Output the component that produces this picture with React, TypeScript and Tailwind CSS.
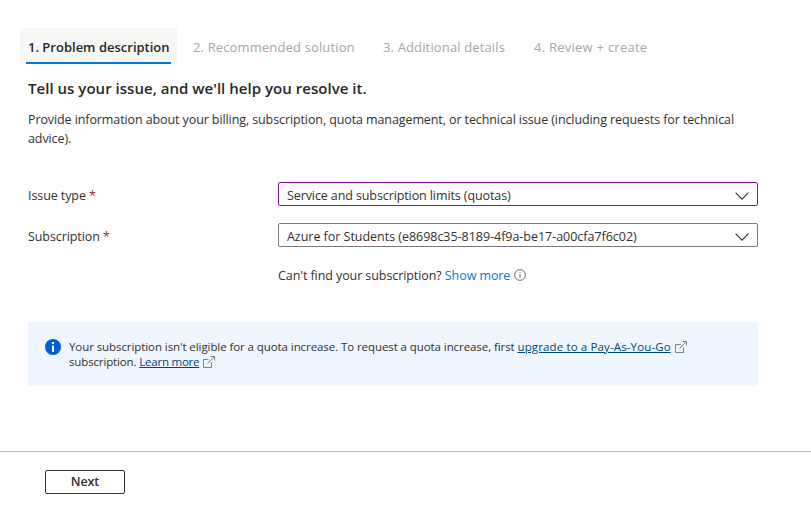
import type { ReactNode } from "react";

const Chevron = () => (
  <svg className="mt-[3px] h-2 w-[14px] shrink-0" viewBox="0 0 14 8" fill="none" stroke="#323130" strokeWidth="1.1">
    <path d="M0.6 0.7 7 7.1 13.4 0.7" />
  </svg>
);

const External = () => (
  <svg className="ml-1 inline-block h-3 w-3 align-[-2px]" viewBox="0 0 12 12" fill="none" stroke="#858585" strokeWidth="1">
    <path d="M5.5 3.5H.5v8h8v-5M4.5 7.5l7-7M7.5.5h4v4" />
  </svg>
);

const Field = ({ label, value, border }: { label: string; value: ReactNode; border: string }) => (
  <div className="flex h-6 items-center">
    <div className="w-[250px] pt-0.5 tracking-[-0.09px]">
      {label} <span className="text-[#a4262c]">*</span>
    </div>
    <div className={`flex h-6 w-[480px] items-center justify-between rounded-[2px] border pr-[8px] pl-2 ${border}`}>
      <span className="pt-0.5">{value}</span>
      <Chevron />
    </div>
  </div>
);

export default function App() {
  return (
    <div className="h-[506px] w-[811px] overflow-hidden bg-white font-['Open_Sans','Noto_Sans',sans-serif] text-[12.5px] leading-[19px] whitespace-nowrap text-[#323130]">
      <nav className="flex pt-7 pl-5 text-[13px] text-[#a6a6a6]">
        <div className="flex h-9 w-[157px] bg-[#f7f7f5] px-1.5">
          <div className="flex w-[145px] items-center border-b-2 border-[#0078d4] pt-1 pl-0.5 font-semibold text-[#292827]">
            <span>1. Problem description</span>
          </div>
        </div>
        <div className="flex h-9 items-center pt-0.5 pl-4">
          <span className="w-[190px] tracking-[0.14px]">2. Recommended solution</span>
          <span className="w-[151px] tracking-[0.14px]">3. Additional details</span>
          <span className="tracking-[0.25px]">4. Review + create</span>
        </div>
      </nav>
      <main className="h-[387px] pl-7">
        <h1 className="pt-[13px] pb-px text-[15px] leading-[22px] font-semibold tracking-[0.03px] text-[#292827]">
          <span>Tell us your issue, and we'll help you resolve it.</span>
        </h1>
        <p className="pt-[10px] tracking-[-0.1px]">
          <span>Provide information about your billing, subscription, quota management, or technical issue (including requests for technical</span>
          <br />
          advice).
        </p>
        <div className="mt-[34px] flex flex-col gap-[17px]">
          <Field label="Issue type" value={<span className="tracking-[-0.1px]">Service and subscription limits (quotas)</span>} border="border-[#881798]" />
          <Field label="Subscription" value={<span className="tracking-[-0.03px]">Azure for Students (e8698c35-8189-4f9a-be17-a00cfa7f6c02)</span>} border="border-[#7a7978]" />
        </div>
        <div className="mt-[19px] flex items-center pl-[250px]">
          <span className="tracking-[-0.08px]">Can't find your subscription? <span className="text-[#0078d4]">Show more</span></span>
          <svg className="mb-px ml-1 h-3 w-3" viewBox="0 0 12 12" fill="none" stroke="#605e5c" strokeWidth="0.9">
            <circle cx="6" cy="6" r="5.4" />
            <path d="M6 5v4M6 3v1" />
          </svg>
        </div>
        <div className="mt-[37px] flex h-16 w-[730px] rounded-[2px] bg-[#eff6ff] pt-[17px] pl-[17px] text-[11.5px] leading-[15px]">
          <svg className="h-4 w-4" viewBox="0 0 16 16">
            <circle cx="8" cy="8" r="8" fill="#015cda" />
            <path d="M7 6.5h2V13H7zM7 3h2v2H7z" fill="white" />
          </svg>
          <p className="pl-2 tracking-[-0.08px]">
            <span>Your subscription isn't eligible for a quota increase. To request a quota increase, first </span>
            <a className="tracking-[0.13px] text-[#004578] underline">upgrade to a Pay-As-You-Go</a>
            <External />
            <br />
            <span className="tracking-[-0.14px]">subscription. </span>
            <a className="tracking-[-0.22px] text-[#004578] underline">Learn more</a>
            <External />
          </p>
        </div>
      </main>
      <footer className="h-[55px] border-t border-[#b8b7b6] pt-[18px] pl-[45px]">
        <button className="block h-6 w-20 rounded-[2px] border border-[#323130] text-center leading-[20px] font-semibold tracking-[-0.1px]">Next</button>
      </footer>
    </div>
  );
}
